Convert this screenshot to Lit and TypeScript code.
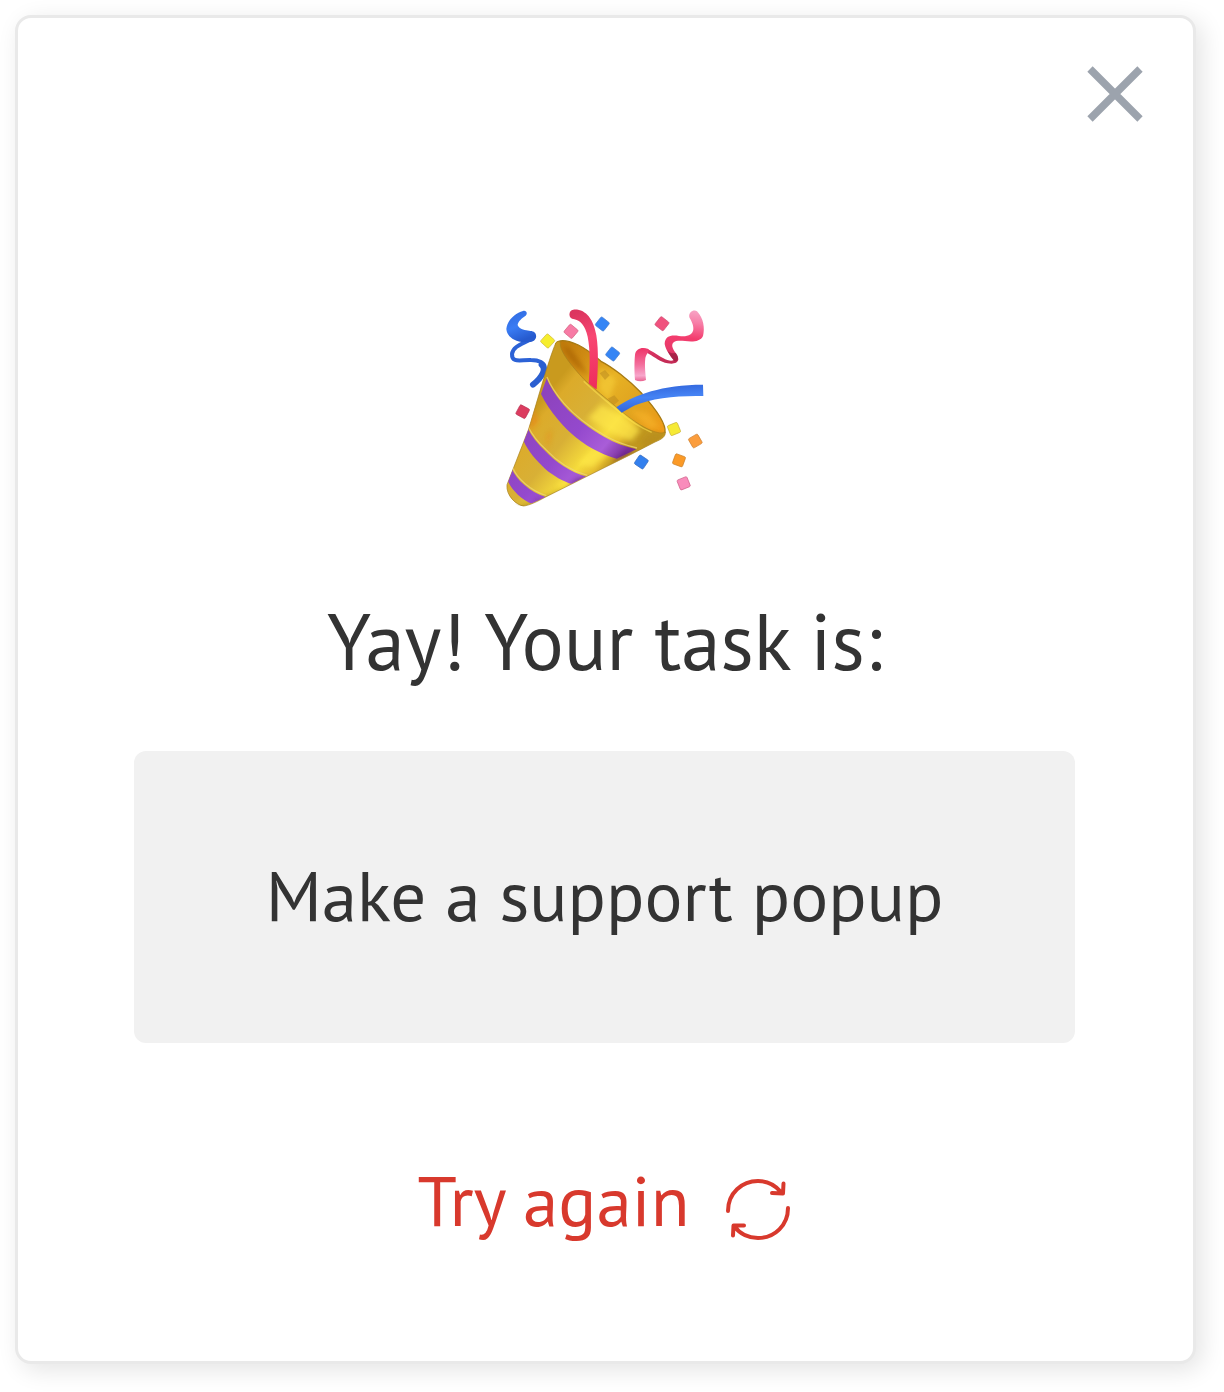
import { LitElement, html, css, svg } from "lit";
import { customElement, property, state } from "lit/decorators.js";

type Confetti = { x: number; y: number; angle: number; fill: string; edge: string };

const CONFETTI: Confetti[] = [
  { x: 128, y: 99, angle: 42, fill: "#f6ee2e", edge: "#cfb73a" },
  { x: 198, y: 70, angle: 40, fill: "#f77ba5", edge: "#d2607f" },
  { x: 292, y: 48, angle: 38, fill: "#3585f5", edge: "#4a7fce" },
  { x: 323, y: 138, angle: 38, fill: "#3585f5", edge: "#4a7fce" },
  { x: 471, y: 47, angle: 38, fill: "#f0527e", edge: "#cf4a70" },
  { x: 53, y: 311, angle: 28, fill: "#dc3c60", edge: "#b93553" },
  { x: 507, y: 363, angle: -22, fill: "#f6ea35", edge: "#c9b437" },
  { x: 571, y: 399, angle: -30, fill: "#fb9d3c", edge: "#cf8133" },
  { x: 522, y: 457, angle: 20, fill: "#fb9a27", edge: "#c9812c" },
  { x: 536, y: 526, angle: -22, fill: "#f98cbb", edge: "#cf5c86" },
  { x: 409, y: 462, angle: 34, fill: "#3380ee", edge: "#3f6fbd" },
];

@customElement("party-popper")
export class PartyPopper extends LitElement {
  static styles = css`
    :host {
      display: block;
    }
    .art {
      display: block;
      width: 200px;
      height: 200px;
    }
  `;

  render() {
    return html`
      <svg class="art" viewBox="0 0 600 600" role="img" aria-label="Party popper">
        <defs>
          <linearGradient id="gold" gradientUnits="userSpaceOnUse" x1="90" y1="300" x2="310" y2="480">
            <stop offset="0" stop-color="#c99a1e" />
            <stop offset="0.12" stop-color="#dcab2a" />
            <stop offset="0.45" stop-color="#d8b036" />
            <stop offset="0.75" stop-color="#f6dc3c" />
            <stop offset="0.9" stop-color="#e6be30" />
            <stop offset="1" stop-color="#c0971f" />
          </linearGradient>
          <linearGradient id="inside" gradientUnits="userSpaceOnUse" x1="170" y1="110" x2="470" y2="370">
            <stop offset="0" stop-color="#c07c0c" />
            <stop offset="0.2" stop-color="#d08c14" />
            <stop offset="0.45" stop-color="#e8b224" />
            <stop offset="0.7" stop-color="#dfa420" />
            <stop offset="1" stop-color="#ee9a18" />
          </linearGradient>
          <linearGradient id="violet" gradientUnits="userSpaceOnUse" x1="100" y1="280" x2="330" y2="470">
            <stop offset="0" stop-color="#8d43bd" />
            <stop offset="0.5" stop-color="#9449cd" />
            <stop offset="0.8" stop-color="#a95dd8" />
            <stop offset="1" stop-color="#7a309a" />
          </linearGradient>
          <linearGradient id="blueLeft" x1="0" y1="0" x2="0.4" y2="1">
            <stop offset="0" stop-color="#2f68dd" />
            <stop offset="0.55" stop-color="#3a7cf4" />
            <stop offset="1" stop-color="#265ace" />
          </linearGradient>
          <linearGradient id="blueRight" x1="0" y1="0" x2="0.15" y2="1">
            <stop offset="0" stop-color="#2f61d8" />
            <stop offset="0.5" stop-color="#4583f4" />
            <stop offset="1" stop-color="#3163d8" />
          </linearGradient>
          <linearGradient id="redMid" gradientUnits="userSpaceOnUse" x1="200" y1="20" x2="280" y2="240">
            <stop offset="0" stop-color="#dc355f" />
            <stop offset="0.35" stop-color="#f84672" />
            <stop offset="1" stop-color="#ee2a5c" />
          </linearGradient>
          <linearGradient id="pinkTail" gradientUnits="userSpaceOnUse" x1="400" y1="120" x2="404" y2="218">
            <stop offset="0" stop-color="#ee3266" />
            <stop offset="0.5" stop-color="#f36d9b" />
            <stop offset="0.85" stop-color="#f8a6cb" />
            <stop offset="1" stop-color="#ea6a97" />
          </linearGradient>
          <linearGradient id="pinkHead" gradientUnits="userSpaceOnUse" x1="560" y1="10" x2="540" y2="170">
            <stop offset="0" stop-color="#f7a0c2" />
            <stop offset="0.2" stop-color="#f77fa8" />
            <stop offset="0.5" stop-color="#f33c6d" />
            <stop offset="0.75" stop-color="#e83a6b" />
            <stop offset="1" stop-color="#c32a55" />
          </linearGradient>
          <filter id="soft" x="-50%" y="-50%" width="200%" height="200%">
            <feGaussianBlur stdDeviation="8" />
          </filter>
          <clipPath id="coneClip">
            <path d="M152 106C132 150 88 310 70 366L6 530C-2 562 20 598 56 594C74 590 100 578 120 568L300 476C360 446 430 412 470 388L482 372L345 321L210 191Z" />
          </clipPath>
        </defs>

        <path fill="none" stroke="#2c62d6" stroke-width="12" stroke-linecap="round" d="M80 92C60 106 24 112 21 138C20 166 46 155 78 156C100 156 122 164 119 182" />
        <path fill="none" stroke="#2b5fd0" stroke-width="18" stroke-linecap="round" d="M110 170C124 182 114 206 84 230" />
        <path fill="url(#blueLeft)" d="M54 9C30 16 6 38 4 63C6 86 28 100 58 103L76 102C92 100 97 86 91 76C86 68 76 70 64 67C50 64 39 58 38 50C40 40 50 30 62 23C70 14 62 6 54 9Z" />

        <path fill="url(#inside)" stroke="#a67a14" stroke-width="4" d="M152 108C160 94 186 96 220 111C246 124 268 142 288 160C320 176 372 216 410 256C446 296 484 344 480 372C468 402 380 360 335 311L200 200Z" />
        <path fill="#a35c04" opacity="0.6" filter="url(#soft)" d="M176 112C196 116 214 144 250 202C220 184 180 150 176 112Z" />
        <path fill="#fbd843" opacity="0.45" filter="url(#soft)" d="M284 176L334 216L310 278L280 236Z" />
        <path fill="#c08d20" opacity="0.6" d="M284 196l16 -10 14 16 -14 14zM308 272l20 -10 14 16 -16 14z" />
        <path fill="#f8b52a" opacity="0.6" filter="url(#soft)" d="M372 304L430 316L464 358L430 360Z" />

        <path
          fill="url(#gold)"
          stroke="#a67f1c"
          stroke-width="2"
          d="M152 106C156 98 166 98 166 106C164 130 198 172 238 215C270 244 304 272 335 298C372 330 410 356 440 368C456 374 472 378 481 372C482 386 470 394 450 402C400 428 350 454 300 478L120 568C98 580 74 592 56 594C34 592 2 562 6 530L70 366C88 310 132 150 152 106Z"
        />
        <g clip-path="url(#coneClip)">
          <path fill="#8c690d" opacity="0.5" filter="url(#soft)" d="M20 606L300 494L490 392L500 430L310 530L60 640Z" />
          <path fill="#b58a1e" opacity="0.6" filter="url(#soft)" d="M410 400L434 376L484 376L480 394L420 424Z" />
          <path fill="#ffe94a" opacity="0.7" filter="url(#soft)" d="M218 468L290 402L340 410L318 430L262 478Z" />
          <path fill="#ffe84c" opacity="0.65" filter="url(#soft)" d="M250 330L290 290L350 326L408 366L380 400L320 376Z" />
          <path fill="#ffe646" opacity="0.6" filter="url(#soft)" d="M150 534L196 500L210 516L176 536Z" />
          <path fill="#ef8017" opacity="0.55" filter="url(#soft)" d="M84 296L100 340L72 370ZM126 384L140 364L128 422Z" />
          <path fill="url(#violet)" d="M125 211C138 242 154 264 175 290C210 330 255 362 300 388C330 405 360 416 394 424L335 452C320 448 300 442 284 433C230 408 190 372 160 336C138 310 120 284 108 258Z" />
          <path fill="url(#violet)" d="M68 361C80 386 98 408 120 428C150 460 195 492 245 506L200 528C175 520 145 504 120 482C92 456 70 430 56 400Z" />
          <path fill="url(#violet)" d="M20 481C34 516 74 552 122 567L82 588C48 574 20 546 7 516Z" />
          <path fill="#5c1c78" opacity="0.6" filter="url(#soft)" d="M326 460L360 436L396 428L350 466ZM194 530L216 510L250 506L206 538ZM80 590L96 572L124 568Z" />
          <path fill="none" stroke="#f0d878" stroke-width="4" opacity="0.7" d="M126 207C138 238 156 262 177 286C212 326 257 358 302 384C332 401 362 412 396 420M70 357C82 382 100 404 122 424C152 456 197 488 247 502M22 477C36 512 76 548 124 563" />
        </g>
        <path fill="none" stroke="#ffe552" stroke-width="4" opacity="0.55" d="M236 220C268 250 302 278 333 304C370 336 408 360 440 373" />

        <path fill="url(#redMid)" d="M205 5C242 2 266 34 274 82C282 130 278 190 275 244C270 242 260 234 251 226C255 176 256 126 248 86C240 54 228 38 208 34C188 32 190 6 205 5Z" />
        <path fill="url(#blueRight)" d="M594 230L595 264C520 262 440 270 390 292C374 300 362 308 350 314L334 298C388 260 472 230 594 230Z" />

        <path fill="url(#pinkHead)" d="M553 28C550 10 568 4 576 10C596 30 600 62 594 84C586 102 560 102 540 99C512 96 500 100 502 116C506 130 520 142 520 154C518 168 502 168 488 166C466 162 450 148 432 138L410 124C430 116 452 140 474 150C488 158 500 160 506 156C496 144 482 126 479 108C480 84 498 80 522 84C546 88 564 80 565 64C566 50 558 38 553 28Z" />
        <path fill="#9a1e42" opacity="0.75" d="M488 130C496 136 506 138 512 134C524 148 520 160 508 160C502 152 494 142 488 130Z" />
        <path fill="url(#pinkTail)" d="M390 216C388 190 388 160 390 140C392 122 410 116 428 122C438 126 424 136 421 150C418 176 422 200 423 216C412 221 400 221 390 216Z" />

        ${CONFETTI.map(
          (c) => svg`<rect x="-16" y="-16" width="32" height="32" rx="4" fill=${c.fill} stroke=${c.edge} stroke-width="2"
            transform="translate(${c.x} ${c.y}) rotate(${c.angle})" />`
        )}
      </svg>
    `;
  }
}

@customElement("app-root")
export class AppRoot extends LitElement {
  @property() task = "Make a support popup";
  @state() private open = true;

  static styles = css`
    :host {
      display: block;
      background: #ffffff;
      color: #333333;
      font-family: "PT Sans", "Noto Sans", sans-serif;
    }
    .page {
      box-sizing: border-box;
      min-height: 100vh;
      display: flex;
      padding: 15px 28px 28px 15px;
    }
    .card {
      flex: 1;
      display: flex;
      flex-direction: column;
      border: 3px solid #e9e9e9;
      border-radius: 16px;
      background: #ffffff;
      box-shadow: 6px 6px 24px rgba(0, 0, 0, 0.11);
    }
    .top {
      display: flex;
      justify-content: flex-end;
      padding: 48px 50px 0;
    }
    button {
      border: 0;
      padding: 0;
      background: none;
      color: inherit;
      font: inherit;
      cursor: pointer;
    }
    .close {
      color: #9ca3ad;
    }
    .close-icon {
      display: block;
      width: 56px;
      height: 56px;
    }
    .content {
      display: flex;
      flex-direction: column;
      align-items: center;
      padding: 186px 118px 0 116px;
    }
    .title {
      margin: 85px 0 62px;
      font-size: 79px;
      line-height: 96px;
      font-weight: 400;
      text-align: center;
    }
    .task {
      align-self: stretch;
      margin: 0;
      padding: 96px 0 100px;
      border-radius: 12px;
      background: #f1f1f1;
      font-size: 71px;
      line-height: 96px;
      text-align: center;
    }
    .retry {
      display: flex;
      align-items: center;
      gap: 34px;
      margin-top: 109px;
      color: #d8392d;
      font-size: 71px;
      line-height: 96px;
    }
    .retry-icon {
      width: 68px;
      height: 68px;
      margin-top: 18px;
    }
  `;

  render() {
    if (!this.open) return html``;
    return html`
      <main class="page">
        <section class="card" aria-labelledby="title">
          <div class="top">
            <button class="close" aria-label="Close" @click=${() => (this.open = false)}>
              <svg class="close-icon" viewBox="0 0 56 56" fill="none" stroke="currentColor" stroke-width="7.5" aria-hidden="true">
                <path d="M3 3L53 53M53 3L3 53" />
              </svg>
            </button>
          </div>
          <div class="content">
            <party-popper></party-popper>
            <h1 class="title" id="title">Yay! Your task is:</h1>
            <p class="task">${this.task}</p>
            <button class="retry" @click=${() => this.dispatchEvent(new CustomEvent("retry"))}>
              <span>Try again</span>
              <svg class="retry-icon" viewBox="0 0 68 68" fill="none" stroke="currentColor" stroke-width="4" stroke-linecap="round" stroke-linejoin="round" aria-hidden="true">
                <path d="M4 36C4 18 18 6 34 6C43 6 51 10 57 17M59.5 8.5L59 18.5L48 18" />
                <path d="M64 33C64 50 51 63 34 63C25 63 16 59 11 52M9 60.5L9.5 50.5L20 50.5" />
              </svg>
            </button>
          </div>
        </section>
      </main>
    `;
  }
}
